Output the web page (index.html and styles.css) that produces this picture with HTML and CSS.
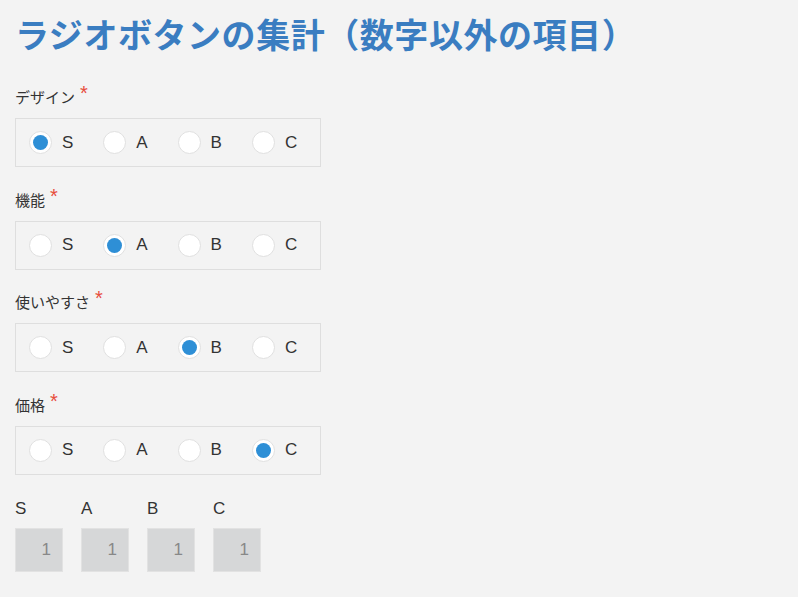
FILE: index.html
```html
<!DOCTYPE html>
<html lang="ja">
<head>
<meta charset="utf-8">
<link rel="stylesheet" href="styles.css">
</head>
<body>
<div class="page">
  <h1 class="title">ラジオボタンの集計（数字以外の項目）</h1>

  <div class="field">
    <div class="label">デザイン<span class="req">*</span></div>
    <div class="radios">
      <div class="opt"><span class="radio on"></span><span class="txt">S</span></div>
      <div class="opt"><span class="radio"></span><span class="txt">A</span></div>
      <div class="opt"><span class="radio"></span><span class="txt">B</span></div>
      <div class="opt"><span class="radio"></span><span class="txt">C</span></div>
    </div>
  </div>

  <div class="field">
    <div class="label">機能<span class="req">*</span></div>
    <div class="radios">
      <div class="opt"><span class="radio"></span><span class="txt">S</span></div>
      <div class="opt"><span class="radio on"></span><span class="txt">A</span></div>
      <div class="opt"><span class="radio"></span><span class="txt">B</span></div>
      <div class="opt"><span class="radio"></span><span class="txt">C</span></div>
    </div>
  </div>

  <div class="field">
    <div class="label">使いやすさ<span class="req">*</span></div>
    <div class="radios">
      <div class="opt"><span class="radio"></span><span class="txt">S</span></div>
      <div class="opt"><span class="radio"></span><span class="txt">A</span></div>
      <div class="opt"><span class="radio on"></span><span class="txt">B</span></div>
      <div class="opt"><span class="radio"></span><span class="txt">C</span></div>
    </div>
  </div>

  <div class="field">
    <div class="label">価格<span class="req">*</span></div>
    <div class="radios">
      <div class="opt"><span class="radio"></span><span class="txt">S</span></div>
      <div class="opt"><span class="radio"></span><span class="txt">A</span></div>
      <div class="opt"><span class="radio"></span><span class="txt">B</span></div>
      <div class="opt"><span class="radio on"></span><span class="txt">C</span></div>
    </div>
  </div>

  <div class="counts">
    <div class="count"><div class="clabel">S</div><div class="cbox">1</div></div>
    <div class="count"><div class="clabel">A</div><div class="cbox">1</div></div>
    <div class="count"><div class="clabel">B</div><div class="cbox">1</div></div>
    <div class="count"><div class="clabel">C</div><div class="cbox">1</div></div>
  </div>
</div>
</body>
</html>
```

FILE: styles.css
```css
html, body {
  margin: 0;
  padding: 0;
  background: #f3f3f3;
}
body {
  font-family: "Noto Sans CJK JP", "Noto Sans", sans-serif;
  color: #333;
}
.page {
  padding: 11px 15px 0 15px;
}
.title {
  margin: 0;
  font-size: 34px;
  line-height: 46px;
  font-weight: bold;
  color: #3a7dc1;
  letter-spacing: 0.55px;
}
.field {
  margin-top: 29px;
}
.field + .field {
  margin-top: 21.5px;
}
.label {
  font-size: 15px;
  line-height: 22px;
  color: #333;
}
.req {
  color: #e74c3c;
  margin-left: 5px;
  font-family: "Liberation Sans", sans-serif;
  font-size: 20px;
  line-height: 10px;
  position: relative;
  top: -3px;
}
.radios {
  margin-top: 10px;
  width: 291px;
  height: 47px;
  border: 1px solid #dedede;
  display: flex;
  align-items: center;
  padding-left: 13px;
  box-sizing: content-box;
}
.opt {
  flex: 0 0 74.3px;
  display: flex;
  align-items: center;
}
.radio {
  flex: none;
  width: 21px;
  height: 21px;
  border: 1px solid #e0e0e0;
  border-radius: 50%;
  background: #fff;
  box-sizing: content-box;
  display: flex;
  align-items: center;
  justify-content: center;
}
.radio.on::after {
  content: "";
  width: 15px;
  height: 15px;
  border-radius: 50%;
  background: #2e8fd6;
}
.txt {
  margin-left: 10px;
  font-family: "Liberation Sans", "Noto Sans", sans-serif;
  font-size: 17px;
  color: #333;
}
.counts {
  display: flex;
  gap: 18px;
  margin-top: 24px;
}
.clabel {
  font-family: "Liberation Sans", "Noto Sans", sans-serif;
  font-size: 17px;
  line-height: 20px;
  color: #333;
}
.cbox {
  margin-top: 9px;
  width: 35px;
  padding-right: 11px;
  height: 42px;
  background: #d6d7d8;
  border: 1px solid #e2e2e2;
  box-sizing: content-box;
  text-align: right;
  font-family: "Liberation Sans", "Noto Sans", sans-serif;
  font-size: 17px;
  line-height: 42px;
  color: #888;
}
```
